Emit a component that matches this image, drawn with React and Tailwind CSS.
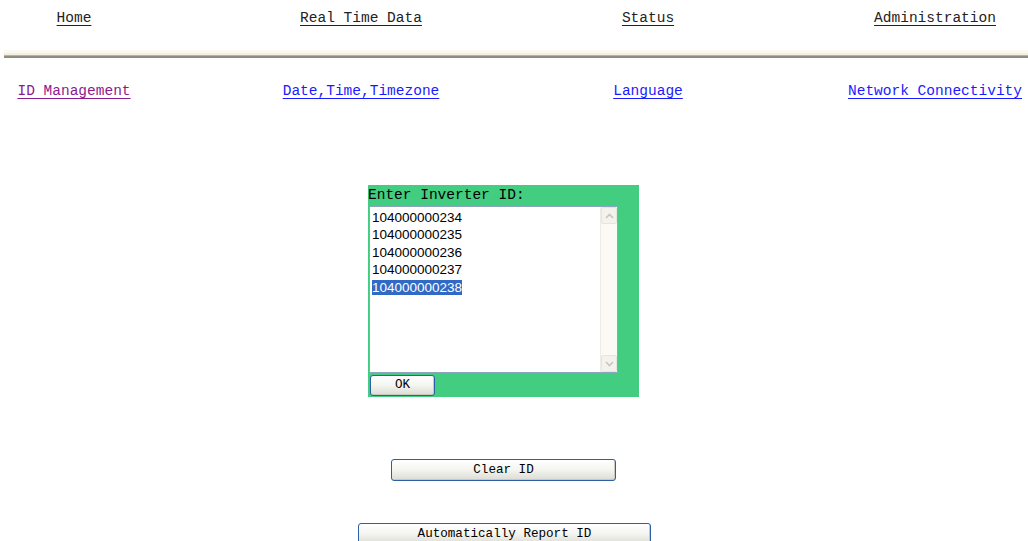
import React from "react";

const topLinks = ["Home", "Real Time Data", "Status", "Administration"];
const subLinks = [
  { label: "ID Management", visited: true },
  { label: "Date,Time,Timezone" },
  { label: "Language" },
  { label: "Network Connectivity" },
];
const ids = ["104000000234", "104000000235", "104000000236", "104000000237", "104000000238"];

const mono = { fontFamily: '"Liberation Mono", "DejaVu Sans Mono", monospace' };

function XpButton({ children, className }) {
  return (
    <button
      className={
        "flex items-center justify-center rounded-[3px] border border-[#2d5fa6] bg-gradient-to-b from-[#ffffff] via-[#f4f4f0] to-[#dcdcd4] text-[12.6px] leading-none text-black shadow-[inset_-1px_-1px_0_#c9c9c0] " +
        className
      }
      style={mono}
    >
      {children}
    </button>
  );
}

export default function App() {
  return (
    <div className="min-h-screen w-[1028px] bg-white" style={mono}>
      {/* Main menu */}
      <div className="grid grid-cols-[repeat(4,140px)] gap-x-[147px] pl-[4px] pt-[8px] text-[14.5px] leading-[20px]">
        {topLinks.map((l) => (
          <div key={l} className="flex justify-center">
            <a className="whitespace-nowrap text-[#222] underline underline-offset-[3px]">{l}</a>
          </div>
        ))}
      </div>

      <div className="ml-[4px] mt-[22px] h-[8px] border-t-[3px] border-[#fcfaf0] bg-[#f4f1e4]">
        <div className="mt-[2px] h-[3px] border-t border-[#b7b4a6] bg-[#8f8d80]" />
      </div>

      {/* Sub menu */}
      <div className="mt-[23px] grid grid-cols-[repeat(4,140px)] gap-x-[147px] pl-[4px] text-[14.5px] leading-[20px]">
        {subLinks.map((l) => (
          <div key={l.label} className="flex justify-center">
            <a
              className={
                "whitespace-nowrap underline underline-offset-[3px] " +
                (l.visited ? "text-[#8a1a8e]" : "text-[#1a1aff]")
              }
            >
              {l.label}
            </a>
          </div>
        ))}
      </div>

      {/* ID entry form */}
      <div className="ml-[368px] mt-[84px] flex h-[212px] w-[271px] flex-col bg-[#43cd80]">
        <div className="h-[21px] text-[14.5px] leading-[20px] text-black">Enter Inverter ID:</div>
        <div className="ml-[1px] flex h-[167px] w-[249px] border border-[#8ea5c0] bg-white">
          <div
            className="flex-1 pl-[2px] pt-[2px] text-[13.5px] leading-[17.4px] text-black"
            style={{ fontFamily: '"Liberation Sans", Arial, sans-serif' }}
          >
            {ids.map((id, i) => (
              <div key={id}>
                <span className={i === ids.length - 1 ? "bg-[#316ac5] text-white" : ""}>{id}</span>
              </div>
            ))}
          </div>
          <div className="flex w-[17px] flex-col justify-between border-l border-[#eeede5] bg-[#fbfaf5]">
            <div className="flex h-[17px] items-center justify-center rounded-[2px] border border-[#e6e6dc] bg-[#f3f2ec]">
              <svg width="9" height="6" viewBox="0 0 9 6">
                <path d="M1 5 L4.5 1.5 L8 5" fill="none" stroke="#c6c6bc" strokeWidth="1.6" />
              </svg>
            </div>
            <div className="flex h-[17px] items-center justify-center rounded-[2px] border border-[#e6e6dc] bg-[#f3f2ec]">
              <svg width="9" height="6" viewBox="0 0 9 6">
                <path d="M1 1 L4.5 4.5 L8 1" fill="none" stroke="#c6c6bc" strokeWidth="1.6" />
              </svg>
            </div>
          </div>
        </div>
        <XpButton className="ml-[2px] mt-[2px] h-[21px] w-[65px]">OK</XpButton>
      </div>

      <div className="mt-[62px] flex flex-col">
        <XpButton className="ml-[391px] h-[22px] w-[225px]">Clear ID</XpButton>
        <XpButton className="ml-[358px] mt-[42px] h-[22px] w-[293px]">Automatically Report ID</XpButton>
      </div>
    </div>
  );
}
